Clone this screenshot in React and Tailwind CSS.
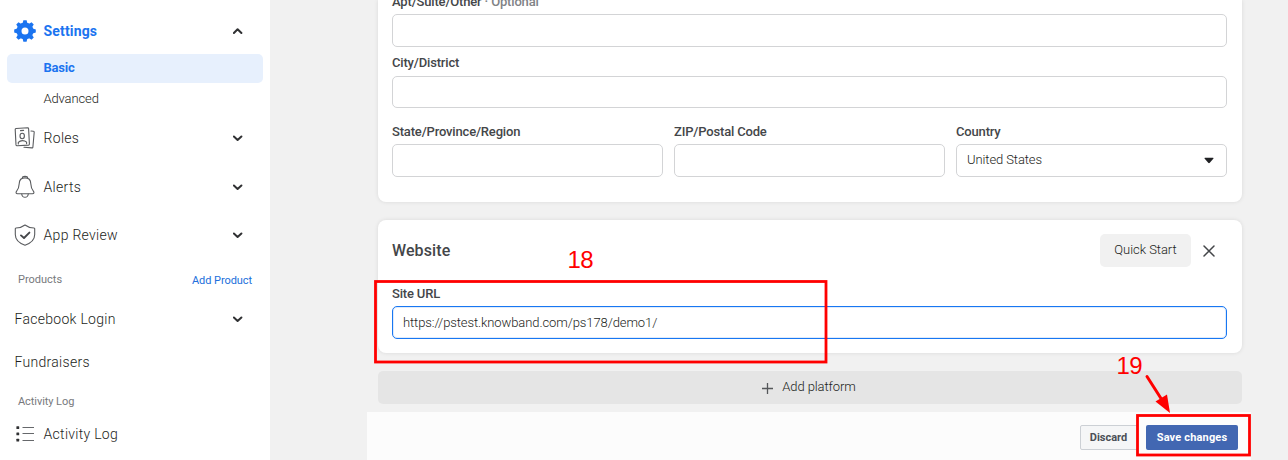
function Chevron({ up }) {
  return (
    <svg width="10" height="7" viewBox="0 0 10 7" fill="none" stroke="#303133" strokeWidth="2" strokeLinecap="round" strokeLinejoin="round">
      <path d={up ? "M0.9 5 L4.6 1.2 L8.4 5" : "M0.9 1.5 L4.6 5 L8.4 1.5"} />
    </svg>
  );
}

function GearIcon() {
  const teeth = [0, 45, 90, 135, 180, 225, 270, 315];
  return (
    <svg width="22" height="22" viewBox="0 0 22 22" fill="none">
      <circle cx="11" cy="11" r="6" stroke="#1b74f0" strokeWidth="5" />
      {teeth.map((a) => (
        <path key={a} d="M8.6 3.4 L9.4 0.2 H12.6 L13.4 3.4 Z" fill="#1b74f0" transform={`rotate(${a} 11 11)`} />
      ))}
    </svg>
  );
}

function RolesIcon() {
  return (
    <svg width="22" height="22" viewBox="0 0 22 22" fill="none" stroke="#5a5c5f" strokeWidth="1.1" strokeLinejoin="round" strokeLinecap="round">
      <path d="M1.2 2.4 Q1.2 1.6 2 1.5 L13.6 0.8 Q14.6 0.8 14.6 1.7 L15.4 17 Q15.4 18 14.5 18.1 L3 18.8 Q2.1 18.8 2 17.9 Z" />
      <path d="M17 4 L19.4 4.2 Q20.3 4.3 20.2 5.2 L18.9 20 Q18.8 21 17.9 20.9 L10 20.2" />
      <path d="M6.5 3.6 L9.6 3.4" />
      <ellipse cx="8.2" cy="9" rx="2.2" ry="2.7" />
      <path d="M4.3 17 V15.4 Q6 13.6 8.4 13.6 Q11 13.6 12.6 15.2 V16.8" />
    </svg>
  );
}

function BellIcon() {
  return (
    <svg width="22" height="24" viewBox="0 0 22 24" fill="none" stroke="#5a5c5f" strokeWidth="1.1" strokeLinejoin="round" strokeLinecap="round">
      <path d="M8.3 3.3 Q8.4 1.4 11 1.4 Q13.6 1.4 13.7 3.3" />
      <path d="M11 2.9 C7.4 2.9 5.3 5.3 5.2 8.7 C5 13.1 4.4 14.2 2.5 16.4 C1.6 17.6 2.1 18.8 3.5 18.8 H18.5 C19.9 18.8 20.4 17.6 19.5 16.4 C17.6 14.2 17 13.1 16.8 8.7 C16.7 5.3 14.6 2.9 11 2.9 Z" />
      <path d="M7.7 19 Q8.2 22.3 11 22.3 Q13.8 22.3 14.3 19" />
    </svg>
  );
}

function ShieldIcon() {
  return (
    <svg width="22" height="22" viewBox="0 0 22 22" fill="none" stroke="#5a5c5f" strokeLinejoin="round" strokeLinecap="round">
      <path d="M11 1 C8.5 3 5 3.9 2 4 Q1.3 4 1.3 4.8 V10.5 C1.3 16.3 5.5 19.3 11 21.2 C16.5 19.3 20.7 16.3 20.7 10.5 V4.8 Q20.7 4 20 4 C17 3.9 13.5 3 11 1 Z" strokeWidth="1.1" />
      <path d="M7 11.4 L10 14 L15.4 8.6" stroke="#444649" strokeWidth="1.9" />
    </svg>
  );
}

function ListIcon() {
  return (
    <svg width="20" height="18" viewBox="0 0 20 18">
      <g fill="#303133">
        <rect x="0.4" y="1.2" width="2.8" height="2.8" rx="0.5" />
        <rect x="0.4" y="7.4" width="2.8" height="2.8" rx="0.5" />
        <rect x="0.4" y="13.8" width="2.8" height="2.8" rx="0.5" />
      </g>
      <path d="M6.5 2.5 H18 M6.5 8.5 H18 M6.5 15.5 H18" stroke="#66686b" strokeWidth="1" />
    </svg>
  );
}

function NavRow({ icon, label, height, chevron }) {
  return (
    <div className={`flex items-center pl-[14px] pr-[27px] ${height}`}>
      {icon && <span className="flex w-[29px] shrink-0">{icon}</span>}
      <span className="flex-1 pl-[0.6px] text-[14px] font-light tracking-[0.28px]">{label}</span>
      {chevron && <Chevron />}
    </div>
  );
}

function Sidebar() {
  return (
    <nav className="flex w-[270px] shrink-0 flex-col bg-white pt-2 text-[#1c1e21]">
      <div className="flex h-[46px] items-center pl-[14px] pr-[27px] text-[#1b74f0]">
        <span className="flex w-[29px]"><GearIcon /></span>
        <span className="flex-1 pl-[0.6px] text-[14px] font-bold tracking-[0.15px]">Settings</span>
        <Chevron up />
      </div>
      <div className="mx-[7px] flex h-[29px] shrink-0 items-center rounded-[5px] bg-[#e7f0fd] pb-[2px] pl-[36.4px] text-[13px] font-bold tracking-[-0.2px] text-[#1b74f0]">Basic</div>
      <div className="flex h-[31px] shrink-0 items-center pl-[43.4px] text-[13px] font-light tracking-[-0.1px]">Advanced</div>
      <NavRow icon={<RolesIcon />} label="Roles" height="h-[48px]" chevron />
      <NavRow icon={<BellIcon />} label="Alerts" height="h-[50px]" chevron />
      <NavRow icon={<ShieldIcon />} label="App Review" height="h-[46px]" chevron />
      <div className="flex h-[42px] items-center justify-between pt-[2px] pl-[18px] pr-[18px] text-[11px] text-[#77797d]">
        <span>Products</span>
        <span className="pt-[2px] tracking-[-0.07px] text-[#216fdb]">Add Product</span>
      </div>
      <NavRow label="Facebook Login" height="h-[38px]" chevron />
      <NavRow label="Fundraisers" height="h-[48px]" />
      <div className="flex h-[32px] items-center pl-[18px] text-[11px] tracking-[-0.07px] text-[#77797d]">Activity Log</div>
      <NavRow icon={<span className="pl-[2px]"><ListIcon /></span>} label="Activity Log" height="h-[32px]" />
    </nav>
  );
}

function Field({ label, children }) {
  return (
    <div className="flex flex-1 flex-col">
      <span className="h-[20px] text-[13px] leading-[15px] font-medium tracking-[-0.17px] text-[#444649]">{label}</span>
      {children || <div className="h-[33px] rounded-[5px] border border-[#d3d4d6] bg-white" />}
    </div>
  );
}

function AddressCard() {
  return (
    <section className="flow-root h-[202px] rounded-b-lg bg-white pr-[15px] pl-[14px] shadow-[0_0_4px_rgba(0,0,0,0.1)]">
      <div className="-mt-[6px] flex">
        <Field label={<>Apt/Suite/Other <span className="text-[#808286]">· Optional</span></>} />
      </div>
      <div className="mt-[8px] flex">
        <Field label="City/District">
          <div className="mt-px h-[32px] rounded-[5px] border border-[#d3d4d6] bg-white" />
        </Field>
      </div>
      <div className="mt-[16px] flex gap-[11px]">
        <Field label="State/Province/Region" />
        <Field label="ZIP/Postal Code" />
        <Field label="Country">
          <div className="flex h-[33px] items-center justify-between rounded-[5px] border border-[#d3d4d6] bg-white pr-[12px] pb-px pl-[10px] text-[13px] font-light tracking-[-0.1px] text-[#1c1e21]">
            <span>United States</span>
            <svg width="10" height="7" viewBox="0 0 10 7">
              <path d="M1 0.8 H9 Q9.8 0.9 9.3 1.7 L5.8 5.8 Q5 6.6 4.2 5.8 L0.7 1.7 Q0.2 0.9 1 0.8 Z" fill="#202124" />
            </svg>
          </div>
        </Field>
      </div>
    </section>
  );
}

function WebsiteCard() {
  return (
    <section className="mt-[18px] h-[133px] rounded-lg bg-white pt-[14px] pr-[15px] pl-[14px] shadow-[0_0_4px_rgba(0,0,0,0.1)]">
      <div className="flex h-[33px] items-center">
        <h2 className="flex-1 pt-px text-[16px] font-medium tracking-[0.1px] text-[#444649]">Website</h2>
        <button className="h-[33px] w-[91px] rounded-[5px] bg-[#f1f1f1] pb-px text-[13px] font-light tracking-[-0.05px] text-[#1c1e21]">Quick Start</button>
        <svg className="mr-[12px] ml-[12px]" width="12" height="12" viewBox="0 0 12 12" stroke="#444649" strokeWidth="1.5" strokeLinecap="round">
          <path d="M1 1 L11 11 M11 1 L1 11" />
        </svg>
      </div>
      <div className="mt-[19px] flex">
        <Field label="Site URL">
          <div className="flex h-[33px] items-center rounded-[5px] border border-[#1877f2] bg-white pl-[10px] text-[13px] font-light tracking-[-0.1px] text-[#1c1e21] shadow-[inset_0_0_0_1px_#dfebfb]">
            https://pstest.knowband.com/ps178/demo1/
          </div>
        </Field>
      </div>
    </section>
  );
}

function Annotations() {
  return (
    <svg className="pointer-events-none absolute inset-0" width="1288" height="460" viewBox="0 0 1288 460" fill="none">
      <rect x="375.5" y="281.5" width="450.5" height="80.5" stroke="#ff0000" strokeWidth="2.8" />
      <rect x="1137.5" y="415.5" width="112" height="39.5" stroke="#ff0000" strokeWidth="2.8" />
      <path d="M1147 376.5 L1162 400" stroke="#ff0000" strokeWidth="3" strokeLinecap="round" />
      <path d="M1170 413 L1155.5 401.5 L1167 394.5 Z" fill="#ff0000" />
      <g fill="#ff0000" fontFamily="Liberation Sans, Arial, sans-serif" fontSize="24">
        <text x="567.5" y="268" textLength="26">18</text>
        <text x="1116.5" y="374" textLength="26">19</text>
      </g>
    </svg>
  );
}

export default function App() {
  return (
    <div className="relative flex h-[460px] w-[1288px] overflow-hidden bg-[#f1f1f1] font-[Roboto,sans-serif]">
      <Sidebar />
      <main className="ml-[97px] flex w-[884px] flex-col">
        <div className="mr-[9px] ml-[11px]">
          <AddressCard />
          <WebsiteCard />
          <button className="mt-[18px] flex h-[33px] w-full items-center justify-center gap-[9px] rounded-[5px] bg-[#e5e5e5] pr-[2px] pb-px text-[13px] font-light tracking-[-0.1px] text-[#1c1e21]">
            <svg className="mt-[3px]" width="11" height="11" viewBox="0 0 11 11" stroke="#55575a" strokeWidth="1.3">
              <path d="M5.5 0 V11 M0 5.5 H11" />
            </svg>
            Add platform
          </button>
        </div>
        <footer className="mt-2 flex h-[48px] items-start justify-end bg-[#fcfcfc] pt-[13px] pr-[13px] text-[11px] font-bold">
          <button className="h-[25px] w-[58px] rounded-[2px] border border-[#ccd0d5] bg-[#f5f6f7] pt-px pr-px text-[#4b4f56]">Discard</button>
          <button className="ml-2 h-[25px] w-[92px] rounded-[2px] bg-[#4267b2] pt-px tracking-[0.17px] text-white">Save changes</button>
        </footer>
      </main>
      <Annotations />
    </div>
  );
}
